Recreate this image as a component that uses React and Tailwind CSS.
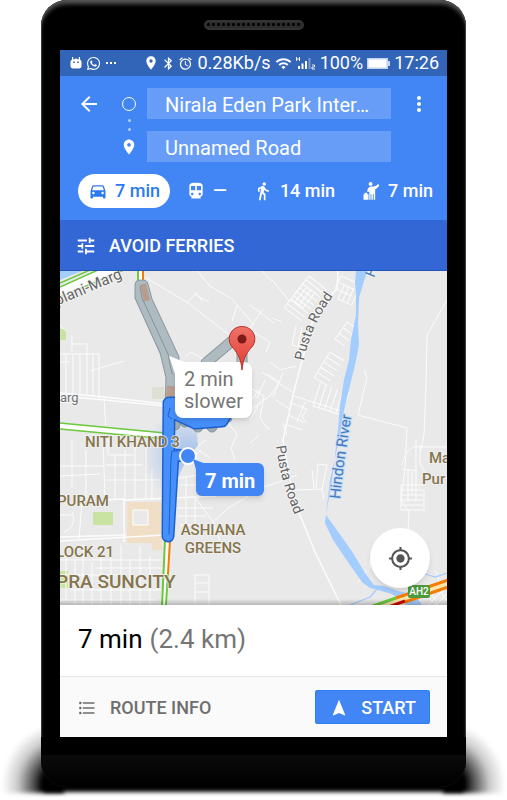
/**
 * Directions screen of a maps app, shown inside a phone body.
 */

import { useState } from 'react'
import {
  MdAccessAlarm,
  MdArrowBack,
  MdBluetooth,
  MdDirectionsCar,
  MdDirectionsTransit,
  MdDirectionsWalk,
  MdFormatListBulleted,
  MdGpsFixed,
  MdLocationOn,
  MdMoreVert,
  MdNavigation,
  MdTune,
  MdWifi,
} from 'react-icons/md'
import { FaWhatsapp } from 'react-icons/fa'

function CabIcon({ className }) {
  return (
    <svg viewBox="0 0 24 24" fill="currentColor" className={className} aria-hidden="true">
      <circle cx="11.500" cy="3.500" r="2.300" />
      <path d="M20.500 3.500 22 5c-1.500 2.500-3 4-5 5v12.500h-1.700V16h-1v6.500h-1.800V16h-1v6.500H10V13H7.500c0-3.500 1.500-6.500 5.500-6.500 3.500 0 5.500-.5 7.500-3z" />
      <path d="M3 16h1.300V14H7.500v2H9v6.500H3z" />
    </svg>
  )
}

const MODES = [
  { id: 'car', label: 'Driving', time: '7 min', Icon: MdDirectionsCar },
  { id: 'transit', label: 'Transit', time: '—', Icon: MdDirectionsTransit },
  { id: 'walk', label: 'Walking', time: '14 min', Icon: MdDirectionsWalk },
  { id: 'cab', label: 'Cab', time: '7 min', Icon: CabIcon },
]

// Minor streets, in map units
const STREETS = [
  'M60 354H99V398M60 362H70M72 335v17M72 344h15v10M60 325l6 6M66 354v39M73 354v40M80 354v41M87 354v41M93 354v42',
  'M90 371l34-10M104 397l2 36M145 277l43 26 44 34M188 302l8-9 7 9M196 295l13 7M197 271l13 15 22 13 22 26',
  'M232 321l5-15M236 335l10-4M185 357l6-5 14 8M103 440l2 60M108 437v18h25M60 466h43M60 476l40-2M72 440v48M86 450v50',
  'M106 465h36M106 480h54M115 455v45M125 450v52M135 440v60M146 445v55M152 470v30M72 512c4 8 0 18-8 20M82 500l-3 40',
  'M60 515h12M66 555v45M75 560v45M83 545v60M92 563v42M101 545v60M111 558v47M121 545v60M130 560v45M140 545v60M150 556v49',
  'M60 560h102M60 575h60M70 590h94M95 568h68M60 600h95',
  'M178 478l20-3v22M180 485h16M186 476v20M178 508h35M186 498v26M195 497v27M178 516h28M195 497l18 25 14-13 38-23M213 522l8 22',
  'M180 525h20M206 440l-10 8 14 10M193 458l8-8M229 424l8 10-6 14 4 12M195 575v30M195 575h14v30M195 583h14M195 592h14',
  'M259 435l-9 8M250 388l14 8-4 22 9 12M265 380l-8 18M250 410l20-14 9-14-12-8M270 362l10 8 16-4M276 400l15 10M262 372l30 20',
  'M250 305l24 18M262 310l-12 18M250 330l20 12-4 10M272 318l10 4M272 280l18 22M262 271l10 10M283 373l-10 24M294 396l50 16',
  'M250 420l10-18M291 403l16 6-5 8 5 6M288 415l17 8M285 424l17 6M287 435l-4-12M305 402l-8 20M240 395l12 10M245 408l14-18',
  'M265 487l32-12M295 490l27-1 5-24-9-1-2 24M312 470l2 18M322 489l2 10',
  'M447 300l-20 35-1 50-2 50-3 15M364 370l3 8-9 37 49 13-2 40-4 32 8 12-1 20M402 465c4-16 10-19 18-18h27',
  'M408 470v32M412 472v22M416 440v60M402 469l14 2M424 490v22M420 445v18l6 12M366 571l-8 12M370 560v8',
  'M434 570c6 4 4 12 4 20M440 590l10 15M432 595l6 10M428 605l18-18M436 605l12-12M428 597l8 8',
]

// Hatched blocks of parallel lanes: origin, rotation, size and spacing
const BLOCKS = [
  { x: 309, y: 276, angle: 38, w: 22, rows: 9, step: 5 },
  { x: 291, y: 299, angle: -52, w: 20, rows: 4, step: 5 },
  { x: 341, y: 276, angle: 24, w: 18, rows: 3, step: 7 },
  { x: 338, y: 299, angle: -66, w: 16, rows: 4, step: 5 },
  { x: 347, y: 322, angle: 35, w: 12, rows: 4, step: 7 },
  { x: 292, y: 345, angle: -78, w: 20, rows: 3, step: 6 },
  { x: 330, y: 352, angle: 32, w: 16, rows: 6, step: 6 },
  { x: 313, y: 406, angle: -72, w: 24, rows: 6, step: 6 },
  { x: 401, y: 485, angle: 0, w: 22, rows: 6, step: 5 },
]

function Label({ x, y, size = 15, anchor, children }) {
  return (
    <text
      x={x}
      y={y}
      fontSize={size}
      textAnchor={anchor}
      fill="#86754c"
      stroke="#f2f2f2"
      strokeWidth="2"
      strokeOpacity=".7"
      paintOrder="stroke"
      fontWeight="500"
    >
      {children}
    </text>
  )
}

function RoadLabel({ path, size = 14, fill = '#636363', stroke = '#f5f5f5', children }) {
  return (
    <text fontSize={size} fill={fill} stroke={stroke} strokeWidth="2" paintOrder="stroke">
      <textPath href={path}>{children}</textPath>
    </text>
  )
}

function MapDrawing() {
  return (
    <svg
      viewBox="60 271 387 334"
      preserveAspectRatio="xMinYMin slice"
      className="block h-full w-full bg-[#e9e9e9]"
      role="img"
      aria-label="Map with driving routes"
    >
      <defs>
        <path id="pusta-north" d="M304 361Q310 328 333 296" />
        <path id="pusta-south" d="M276 446Q280 480 296 518" />
        <path id="hindon" d="M340 499Q344 460 354 400" />
        <path id="marg" d="M54 307L134 273" />
        <radialGradient id="heading" gradientUnits="userSpaceOnUse" cx="188" cy="456" r="46">
          <stop offset="0" stopColor="#4285f4" stopOpacity=".45" />
          <stop offset="1" stopColor="#4285f4" stopOpacity="0" />
        </radialGradient>
        <linearGradient id="map-foot" x1="0" y1="0" x2="0" y2="1">
          <stop offset="0" stopColor="#000" stopOpacity="0" />
          <stop offset="1" stopColor="#000" stopOpacity=".22" />
        </linearGradient>
      </defs>

      {/* Parks and grounds */}
      <path d="M60 329h6v11h-6zM93 512h20v13H93zM60 571h8v17h-8z" fill="#c9e4a2" />
      <path d="M127 502h35v48h-10v-7h-25z" fill="#f0dfc6" />
      <path d="M133 510h15v15h-15z" fill="#e9e9e9" stroke="#fff" />
      <path d="M152 387h12v12h-12z" fill="#dfdfd6" />

      {/* Streets */}
      <g fill="none" stroke="#fcfcfc" strokeWidth="1">
        {STREETS.map((d) => (
          <path key={d} d={d} />
        ))}
        {BLOCKS.map((b) => (
          <g key={`${b.x}-${b.y}`} transform={`translate(${b.x} ${b.y}) rotate(${b.angle})`}>
            {Array.from({ length: b.rows }, (_, i) => (
              <path key={i} d={`M0 ${i * b.step}h${b.w}`} />
            ))}
            <path d={`M0 0v${(b.rows - 1) * b.step}`} />
          </g>
        ))}
        <path
          d="M338 271l-1 18-22 22-7 27-15 57-10 45 7 40 10 35 15 37 26 53"
          strokeWidth="1.500"
        />
        <path d="M60 393l45 4 60 7M60 396l45 4 60 6M60 541l105-6M60 537l66-2M124 542V500l72-3 20-1M104 500l20-1" strokeWidth="1.500" />
      </g>

      {/* River */}
      <path
        d="M367 271l-8 27-1 27 1 20-4 20-5 20-7 30-4 25-9 40-5 43 8 17 17 25 12 17 8 6 8 2 14 4 8 6 10 8h14l-9-13-17-4-14-5-10-1-9-12-12-20-14-20-13-18 6-35 6-50 2-25 4-25 5-20 2-20 5-25v-20l-1-13 2-20 7-21z"
        fill="#a3ccff"
      />
      <path d="M60 271h22l-22 9z" fill="#a3ccff" />
      <path d="M350 605l20-8 8-9M425 574l10 3 12-4" fill="none" stroke="#a3ccff" strokeWidth="1.200" />

      {/* Roads with traffic */}
      <g fill="none">
        <path d="M60 291l54-22" stroke="#fff" strokeWidth="9" />
        <path d="M60 283l30-13M60 287l38-17M60 297l64-27" stroke="#6cc83c" strokeWidth="1.500" />
        <path d="M60 301l10-4" stroke="#f57c00" strokeWidth="1.500" />
        <path d="M60 426l107 10" stroke="#fff" strokeWidth="5" />
        <path d="M60 423l105 10M60 429l107 10" stroke="#6cc83c" strokeWidth="1.500" />
        <path d="M140.500 268v18M168 540l-3 66" stroke="#fff" strokeWidth="5" />
        <path d="M138 268v16M165 540l-3 66M168 572l-2 34" stroke="#6cc83c" strokeWidth="2" />
        <path d="M143 268v14M170 540l-2 34" stroke="#f57c00" strokeWidth="2" />
        <path d="M374 611l74-28" stroke="#fbe7ae" strokeWidth="8" />
        <path d="M370 607l26-9" stroke="#6cc83c" strokeWidth="3" />
        <path d="M396 598l52-18M405 602l43-15" stroke="#f57c00" strokeWidth="3" />
        <path d="M383 609l22-8" stroke="#d50000" strokeWidth="3" />
      </g>

      {/* Heading of the current location */}
      <path d="M188 456l10-10-2-24-30-14-26 40 8 50 30-20z" fill="url(#heading)" />

      {/* Slower route */}
      <g fill="none" strokeLinecap="round" strokeLinejoin="round">
        <path d="M140 285v12l25 55 6 25-1 30M143 285l4 15 27 58M206 363l26-22M242 352v14" stroke="#8b979d" strokeWidth="11" />
        <path d="M140 285v12l25 55 6 25-1 30M143 285l4 15 27 58M206 363l26-22M242 352v14" stroke="#aebbc1" strokeWidth="9" />
        <path d="M143 284l4 17" stroke="#b89c8e" strokeWidth="6" strokeLinecap="butt" />
        <path d="M171 386l-1 14" stroke="#b89c8e" strokeWidth="8" strokeLinecap="butt" />
        <path d="M140 286l2 12 26 56 4 20" stroke="#87939a" strokeWidth="1" />
      </g>
      <g fill="#9eabb3" stroke="#87939a">
        <circle cx="175" cy="425" r="5" />
        <circle cx="185" cy="422" r="5" />
        <circle cx="198" cy="427" r="5" />
        <circle cx="212" cy="427" r="5" />
        <circle cx="228" cy="418" r="4" />
      </g>

      {/* Selected route */}
      <g fill="none" strokeLinecap="round" strokeLinejoin="round">
        <path d="M178 403h-9l-1 133M173 455l-5 81M172 408l4 6 19 9 27-2 5-9M173 455l15 1" stroke="#1f5fcb" strokeWidth="13" />
        <path d="M178 403h-9l-1 133M173 455l-5 81M172 408l4 6 19 9 27-2 5-9M173 455l15 1" stroke="#4690fb" strokeWidth="10" />
        <path d="M170 408l-2 8 4 3M178 451h-6l-1 8-2 75" stroke="#1f5fcb" strokeWidth="1" />
      </g>

      {/* Place names */}
      <RoadLabel path="#marg" size={15}>iplani-Marg</RoadLabel>
      <RoadLabel path="#pusta-north">Pusta Road</RoadLabel>
      <RoadLabel path="#pusta-south">Pusta Road</RoadLabel>
      <RoadLabel path="#hindon" size={15} fill="#4379bd" stroke="#c5dcf8">Hindon River</RoadLabel>
      <text x="60" y="402" fontSize="13" fill="#737373" stroke="#f5f5f5" strokeWidth="2" paintOrder="stroke">arg</text>
      <text transform="translate(374 278) rotate(-68)" fontSize="14" fill="#4379bd">H</text>
      <Label x={85} y={447}>NITI KHAND 3</Label>
      <Label x={57} y={506}>PURAM</Label>
      <Label x={56} y={557}>LOCK 21</Label>
      <Label x={56} y={588} size={19}>PRA SUNCITY</Label>
      <Label x={213} y={535} anchor="middle">ASHIANA</Label>
      <Label x={213} y={553} anchor="middle">GREENS</Label>
      <Label x={429} y={463}>Ma</Label>
      <Label x={422} y={484}>Pur</Label>

      <circle cx="188" cy="456" r="8" fill="#4285f4" stroke="#fff" strokeWidth="2" />

      <rect x="408" y="585" width="22" height="13" rx="2" fill="#4e9a3f" />
      <text x="419" y="595" fontSize="10" fontWeight="500" textAnchor="middle" fill="#fff">AH2</text>
      <rect x="60" y="599" width="1200" height="6" fill="url(#map-foot)" />
    </svg>
  )
}

function StatusBar() {
  return (
    <div className="flex h-[26px] items-center gap-1 bg-[#3264b8] pr-2 pl-[10px] text-lg leading-none text-white">
      <svg viewBox="0 0 12 12" fill="currentColor" className="size-3 shrink-0" aria-hidden="true">
        <path d="M2 0h1.200v2.200h1.600L5.500 1.500h1l.7.700h1.600V0H10v2.500c1 .8 1.500 1.500 1.500 2.500v4c0 1.500-1 2.500-2.500 2.500H3C1.500 11.500.5 10.500.5 9V5c0-1 .5-1.700 1.500-2.500z" />
        <path d="M3.200 4.500h1.600v1.600H3.200zM7.200 4.500h1.600v1.600H7.200z" fill="#3264b8" />
      </svg>
      <FaWhatsapp className="size-[15px] shrink-0" />
      <svg viewBox="0 0 12 4" fill="currentColor" className="h-1 w-3 shrink-0" aria-hidden="true">
        <path d="M1 1h2v2H1zM5 1h2v2H5zM9 1h2v2H9z" />
      </svg>
      <div className="ml-auto flex items-center gap-1">
        <div className="flex items-center gap-0.5">
          <MdLocationOn className="size-4" />
          <MdBluetooth className="size-[15px]" />
          <MdAccessAlarm className="size-[15px]" />
        </div>
        <span>0.28Kb/s</span>
        <MdWifi className="size-[17px]" />
        <svg viewBox="0 0 20 14" fill="currentColor" className="h-[14px] w-5" aria-hidden="true">
          <path d="M2 10h2v3H2zM5.500 7.500h2V13h-2zM9 5h2v8H9z" />
          <path d="M12.500 2h2v11h-2z" opacity=".35" />
          <path d="M.5 1v4M3.500 1v4M.5 3h3M16 9h2.500v2H16v2h3" fill="none" stroke="currentColor" strokeWidth=".9" />
        </svg>
        <span>100%</span>
        <svg viewBox="0 0 23 11" className="h-[11px] w-[23px]" aria-hidden="true">
          <path d="M0 0h21v3h2v5h-2v3H0z" fill="#c4d3ee" />
          <path d="M1.500 1.500h18v8h-18z" fill="#fff" />
        </svg>
        <span>17:26</span>
      </div>
    </div>
  )
}

export default function App() {
  const [mode, setMode] = useState('car')

  const fieldStyle =
    'h-[31px] w-full min-w-0 bg-white/20 px-[18px] pt-0.5 text-xl leading-none text-white outline-none'

  return (
    <div className="relative overflow-hidden bg-white px-[41px] pb-[13px] font-[Roboto,sans-serif]">
      {/* Shadow under the phone */}
      <div className="absolute bottom-[7px] left-0 h-[70px] w-16 bg-[radial-gradient(ellipse_62px_62px_at_100%_88%,#000_35%,#000a_50%,#0003_75%,transparent_100%)] blur-[2px]" />
      <div className="absolute right-0 bottom-[7px] h-[70px] w-16 bg-[radial-gradient(ellipse_62px_62px_at_0%_88%,#000_35%,#000a_50%,#0003_75%,transparent_100%)] blur-[2px]" />
      <div className="absolute inset-x-11 bottom-[8px] h-4 bg-black blur-[2px]" />

      <div className="relative rounded-[26px] bg-black px-[19px] shadow-[inset_0_5px_4px_-1px_#555,inset_0_0_0_1px_#333]">
        <div className="flex h-[50px] justify-center pt-5">
          <div className="h-[10px] w-[100px] rounded-full border-2 border-[#333] bg-[radial-gradient(circle,#000_1px,#2c2c2c_2px)] bg-[length:5px_5px]" />
        </div>

        <main className="flex flex-col">
          <StatusBar />

          <header className="bg-[#4285f4] text-white">
            <div className="flex gap-4 pt-3 pr-4 pl-[17px]">
              <button aria-label="Back" className="flex h-[31px] w-6 items-center justify-center">
                <MdArrowBack className="size-6" />
              </button>
              <div className="flex flex-1 gap-1.5">
                <div className="flex w-6 flex-col items-center">
                  <span className="flex h-[31px] items-center">
                    <span className="size-[14px] rounded-full border border-white" />
                  </span>
                  <span className="flex h-3 flex-col items-center justify-between">
                    <span className="size-[3px] rounded-full bg-white/60" />
                    <span className="size-[3px] rounded-full bg-white/60" />
                  </span>
                  <span className="flex h-[31px] items-center">
                    <MdLocationOn className="size-[18px]" />
                  </span>
                </div>
                <div className="flex min-w-0 flex-1 flex-col gap-3">
                  <input aria-label="Start" readOnly value="Nirala Eden Park Inter…" className={fieldStyle} />
                  <input aria-label="Destination" readOnly value="Unnamed Road" className={fieldStyle} />
                </div>
              </div>
              <button aria-label="More options" className="flex h-[31px] w-6 items-center justify-center">
                <MdMoreVert className="size-6" />
              </button>
            </div>

            <div className="flex gap-1.5 px-[18px] py-3">
              {MODES.map(({ id, label, time, Icon }) => (
                <button
                  key={id}
                  aria-label={`${label} ${time}`}
                  onClick={() => setMode(id)}
                  className={`flex h-[34px] items-center gap-[7px] rounded-full px-[10px] text-lg leading-none font-medium whitespace-nowrap ${
                    mode === id ? 'bg-white text-[#2a7af0]' : 'text-white'
                  }`}
                >
                  <Icon className="size-5" />
                  {time}
                </button>
              ))}
            </div>

            <button className="flex h-[51px] w-full items-center gap-3 border-b border-[#2456b8] bg-[#3367d6] px-[15px] pt-0.5 text-lg leading-none font-medium">
              <MdTune className="size-[22px]" />
              AVOID FERRIES
            </button>
          </header>

          <section className="relative h-[334px] overflow-hidden">
            <MapDrawing />

            <button className="absolute top-[91px] left-[115px] rounded-lg bg-white px-[9px] py-[6px] text-left text-xl leading-[22px] text-[#757575] shadow-md">
              <svg viewBox="0 0 20 22" className="absolute -top-[6px] -left-[6px] h-[22px] w-5" aria-hidden="true">
                <path d="M0 0l18 7-11 14z" fill="#fff" />
              </svg>
              <span className="relative">
                2 min
                <br />
                slower
              </span>
            </button>

            <button className="absolute top-[192px] left-[136px] flex h-[33px] items-center rounded-md bg-[#4285f4] px-[9px] pt-0.5 text-xl leading-none font-bold text-white shadow-md">
              <svg viewBox="0 0 16 16" className="absolute -top-1 -left-[3px] size-4" aria-hidden="true">
                <path d="M0 0l13 5-9 9z" fill="#4285f4" />
              </svg>
              <span className="relative">7 min</span>
            </button>

            {/* Destination pin */}
            <svg viewBox="0 0 28 46" className="absolute top-[54px] left-[168px] h-[46px] w-7" aria-hidden="true">
              <defs>
                <linearGradient id="pin" x1="0" y1="0" x2="0" y2="1">
                  <stop offset="0" stopColor="#f0736a" />
                  <stop offset="1" stopColor="#e03a30" />
                </linearGradient>
              </defs>
              <path
                d="M14 45C13 34 10 29 5.500 23.500A12.500 12.500 0 0 1 14 1.500a12.500 12.500 0 0 1 8.500 22C18 29 15 34 14 45z"
                fill="url(#pin)"
                stroke="#b5342c"
              />
              <circle cx="14" cy="14" r="4.500" fill="#7c1c16" />
            </svg>

            <button
              aria-label="My location"
              className="absolute right-[17px] bottom-[17px] flex size-[60px] items-center justify-center rounded-full bg-white text-[#555] shadow-md"
            >
              <MdGpsFixed className="size-[25px]" />
            </button>
          </section>

          <section className="flex h-[72px] items-center gap-[7px] border-b border-[#e6e6e6] bg-white px-[18px] pb-1 text-[26px] leading-none text-black">
            <span>7 min</span>
            <span className="text-[#757575]">(2.4 km)</span>
          </section>

          <footer className="flex h-[60px] items-center justify-between bg-[#fafafa] px-[17px] text-lg leading-none font-medium">
            <button className="flex items-center gap-[13px] pt-0.5 text-[#6e6e6e]">
              <MdFormatListBulleted className="size-5" />
              ROUTE INFO
            </button>
            <button className="flex h-[34px] items-center gap-3 rounded-[2px] border border-[#2a7ff8] bg-[#4285f4] px-[13px] pt-0.5 text-white">
              <MdNavigation className="size-5" />
              START
            </button>
          </footer>
        </main>

        <div className="-mx-[19px] h-[50px] rounded-b-[26px] bg-[linear-gradient(#000_36%,#0a0a0a_36%,#000)]" />
      </div>
    </div>
  )
}
